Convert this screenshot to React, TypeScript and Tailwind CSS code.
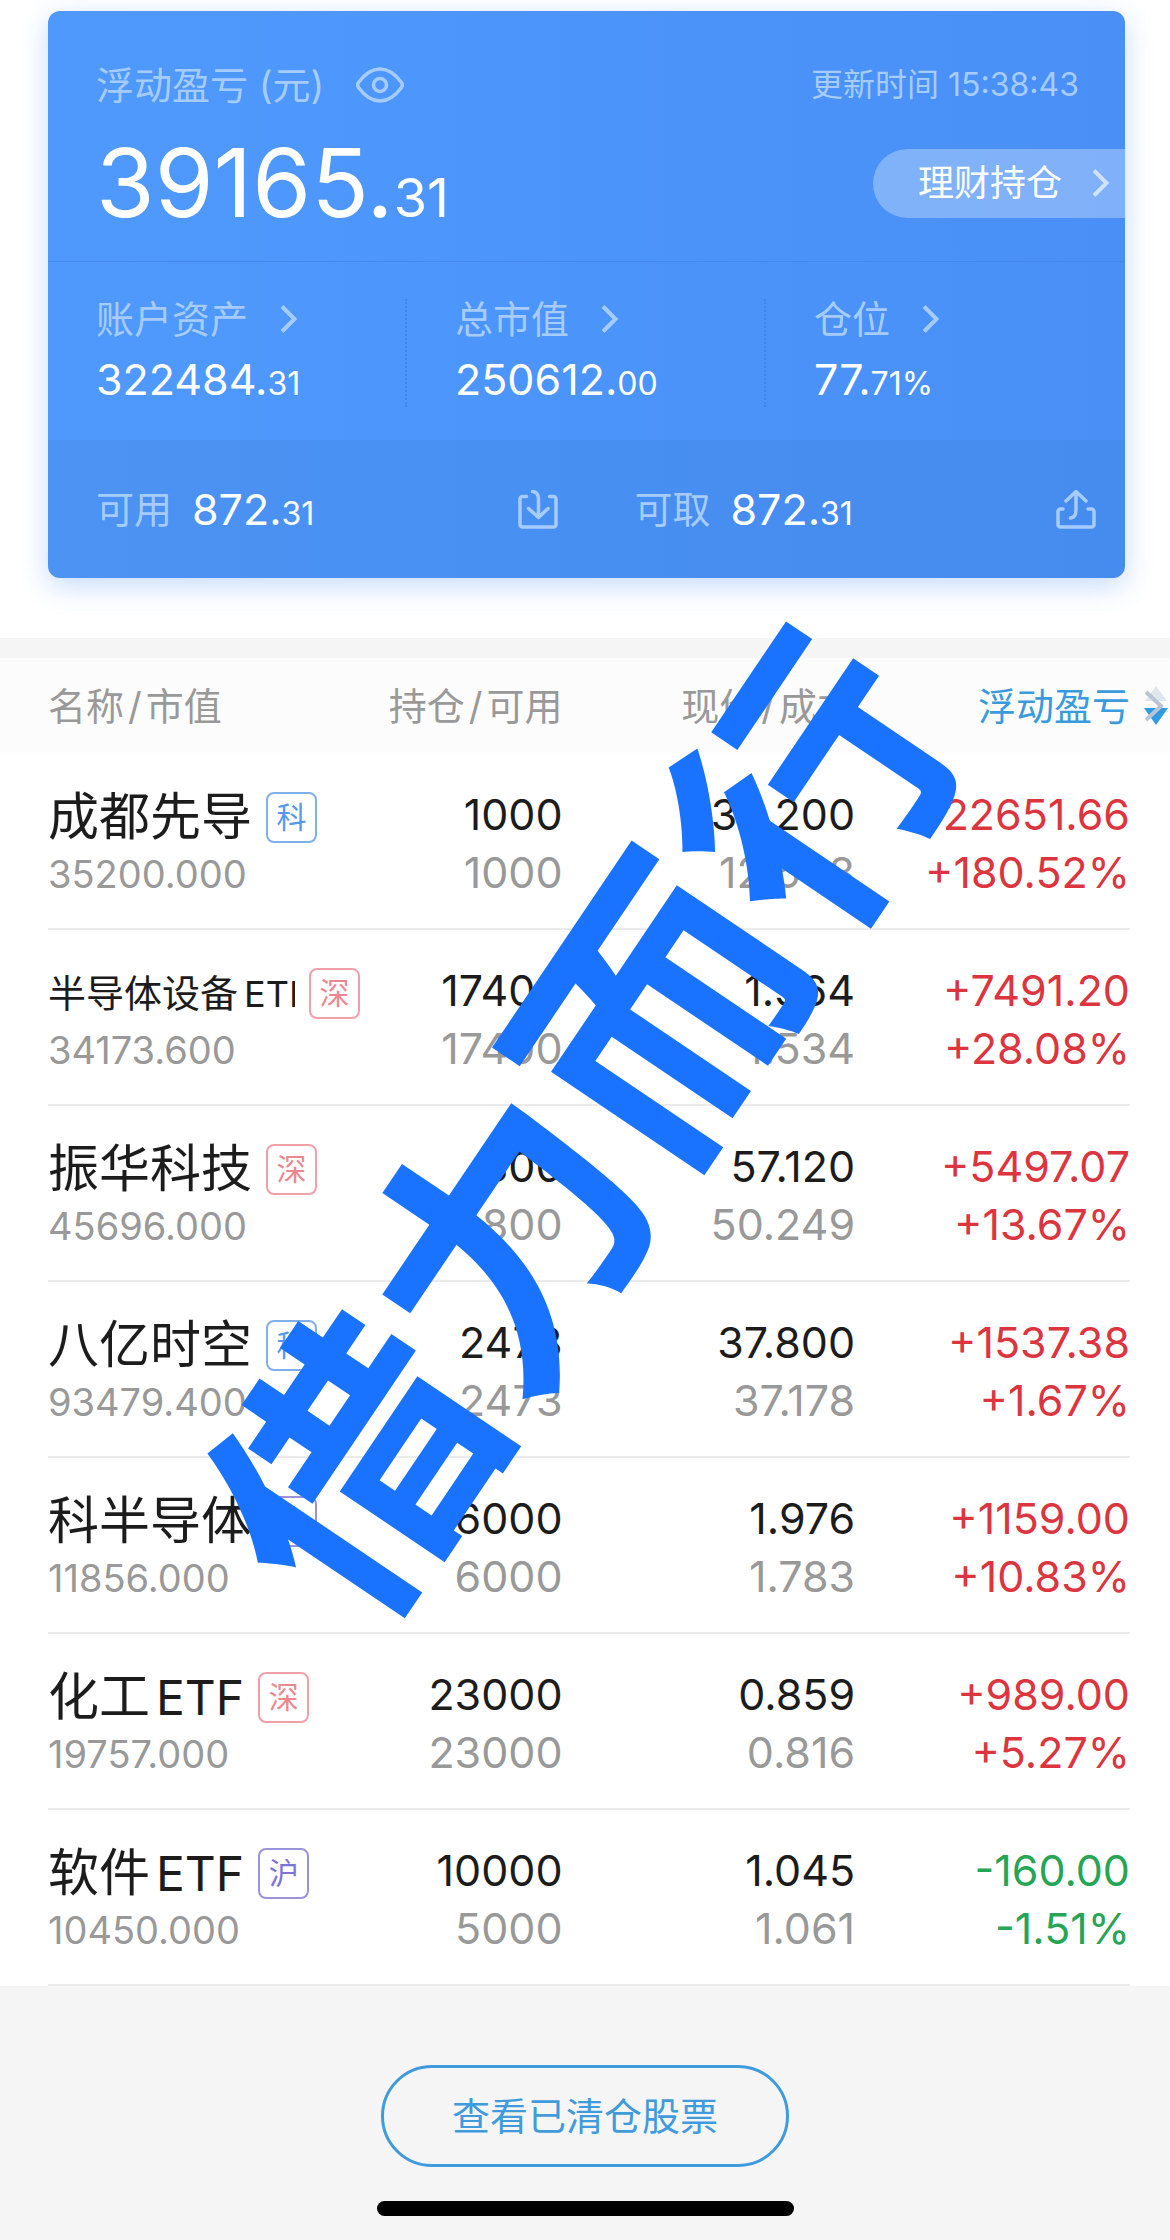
import React from "react";

type Market = "科" | "深" | "沪";

interface Holding {
  name: string;
  suffix?: string;
  compact?: boolean;
  market: Market;
  value: string;
  held: string;
  available: string;
  price: string;
  cost: string;
  profit: string;
  rate: string;
  down?: boolean;
}

const holdings: Holding[] = [
  { name: "成都先导", market: "科", value: "35200.000", held: "1000", available: "1000", price: "35.200", cost: "12.548", profit: "+22651.66", rate: "+180.52%" },
  { name: "半导体设备", suffix: "ETF", compact: true, market: "深", value: "34173.600", held: "17400", available: "17400", price: "1.964", cost: "1.534", profit: "+7491.20", rate: "+28.08%" },
  { name: "振华科技", market: "深", value: "45696.000", held: "800", available: "800", price: "57.120", cost: "50.249", profit: "+5497.07", rate: "+13.67%" },
  { name: "八亿时空", market: "科", value: "93479.400", held: "2473", available: "2473", price: "37.800", cost: "37.178", profit: "+1537.38", rate: "+1.67%" },
  { name: "科半导体", market: "沪", value: "11856.000", held: "6000", available: "6000", price: "1.976", cost: "1.783", profit: "+1159.00", rate: "+10.83%" },
  { name: "化工", suffix: "ETF", market: "深", value: "19757.000", held: "23000", available: "23000", price: "0.859", cost: "0.816", profit: "+989.00", rate: "+5.27%" },
  { name: "软件", suffix: "ETF", market: "沪", value: "10450.000", held: "10000", available: "5000", price: "1.045", cost: "1.061", profit: "-160.00", rate: "-1.51%", down: true },
];

const marketStyle: Record<Market, string> = {
  科: "border-[#7fb0ec] text-[#5598ee]",
  深: "border-[#f0a0a8] text-[#ee8690]",
  沪: "border-[#9a93dc] text-[#7d74da]",
};

function Chevron() {
  return (
    <svg width="18" height="30" viewBox="0 0 18 30" fill="none" stroke="currentColor" strokeWidth="4" aria-hidden="true">
      <path d="M2 2.5 14.5 15 2 27.5" />
    </svg>
  );
}

function EyeIcon() {
  return (
    <svg width="48" height="36" viewBox="0 0 48 36" fill="none" stroke="currentColor" strokeWidth="3.5" aria-hidden="true">
      <path d="M2.5 15.5C8 8 15 2 24 2S40 8 45.5 15.500Q47.300 18 45.500 20.500C40 28 33 34 24 34S8 28 2.500 20.500Q.7 18 2.500 15.500Z" />
      <circle cx="24" cy="18" r="6.500" />
    </svg>
  );
}

function TransferInIcon() {
  return (
    <svg width="40" height="40" viewBox="0 0 40 40" fill="none" stroke="currentColor" strokeWidth="3.5" strokeLinecap="round" strokeLinejoin="round" aria-hidden="true">
      <path d="M8.500 7.500H4.500a2.500 2.500 0 0 0-2.500 2.500V35.500A2.500 2.500 0 0 0 4.500 38H35.500a2.500 2.500 0 0 0 2.500-2.500V10A2.500 2.500 0 0 0 35.500 7.500H31.500" />
      <path d="M14.500 2.500Q20.500 3 20.500 10V28.500M10.500 19.500 20.500 28.500 30 19.500" />
    </svg>
  );
}

function TransferOutIcon() {
  return (
    <svg width="40" height="40" viewBox="0 0 40 40" fill="none" stroke="currentColor" strokeWidth="3.5" strokeLinecap="round" strokeLinejoin="round" aria-hidden="true">
      <path d="M7 20H4.500A2.500 2.500 0 0 0 2 22.500V35.500A2.500 2.500 0 0 0 4.500 38H35.500a2.500 2.500 0 0 0 2.500-2.500V22.500A2.500 2.500 0 0 0 35.500 20H32" />
      <path d="M14.500 29Q20 28.500 20 21V2.500M10 12 20 2.500 30 12" />
    </svg>
  );
}

function SortIcon() {
  return (
    <svg width="24" height="40" viewBox="0 0 24 40" aria-hidden="true">
      <path d="M12 0 23 15H1Z" fill="#dfe6ee" />
      <path d="M0 22H24L12 39Z" fill="#2f9be2" />
      <path d="M2 6 17 20 2 34" fill="none" stroke="#b9c4d4" strokeWidth="4" />
    </svg>
  );
}

function Slash() {
  return <span className="mx-1">/</span>;
}

function Amount({ whole, rest }: { whole: string; rest: string }) {
  return (
    <span className="block text-[43px] leading-[56px] text-white">
      {whole}.<span className="text-[32px] leading-none">{rest}</span>
    </span>
  );
}

function Metric({ label, whole, rest, divided }: { label: string; whole: string; rest: string; divided?: boolean }) {
  return (
    <a href="#detail" className={`block pl-12 ${divided ? "border-r-2 border-dotted border-[#3f86ea]" : ""}`}>
      <span className="flex h-10 items-center gap-8 text-[38px] leading-10 text-[#a6ccff]">
        {label}
        <Chevron />
      </span>
      <span className="mt-3 block h-[56px]">
        <Amount whole={whole} rest={rest} />
      </span>
    </a>
  );
}

function SummaryCard() {
  return (
    <section className="mr-[45px] ml-12 overflow-hidden rounded-xl bg-linear-to-r from-[#5099fc] via-[#4b94fa] to-[#498ff6] shadow-[0_8px_28px_rgba(74,144,250,0.32)]">
      <div className="border-b border-[#4388ea] pt-[50px] pb-[30px] pl-12">
        <div className="flex h-12 items-center justify-between pr-[46px] leading-[48px] text-[#a6ccff]">
          <div className="flex items-center gap-8">
            <h1 className="text-[38px]">浮动盈亏 (元)</h1>
            <button type="button" aria-label="隐藏金额">
              <EyeIcon />
            </button>
          </div>
          <p className="text-[32px]">更新时间 15:38:43</p>
        </div>
        <div className="mt-[26px] flex h-24 items-center justify-between">
          <p className="text-[95px] leading-[96px] text-white">
            39165.<span className="text-[54px] leading-none">31</span>
          </p>
          <button type="button" className="flex h-[69px] items-center gap-[30px] rounded-l-full bg-white/30 pr-[15px] pl-[45px] text-[36px] text-white">
            理财持仓
            <span className="text-[#cfe2ff]">
              <Chevron />
            </span>
          </button>
        </div>
      </div>
      <div className="grid grid-cols-3 pt-[37px] pb-[33px]">
        <Metric label="账户资产" whole="322484" rest="31" divided />
        <Metric label="总市值" whole="250612" rest="00" divided />
        <Metric label="仓位" whole="77" rest="71%" />
      </div>
      <div className="grid grid-cols-2 bg-[#3c7fd0]/20 py-[41px] text-[38px] leading-[56px] text-[#a6ccff]">
        <div className="flex h-[56px] items-center gap-5 pr-[29px] pl-12">
          <span>可用</span>
          <Amount whole="872" rest="31" />
          <button type="button" aria-label="转入" className="ml-auto">
            <TransferInIcon />
          </button>
        </div>
        <div className="flex h-[56px] items-center gap-5 pr-[29px] pl-12">
          <span>可取</span>
          <Amount whole="872" rest="31" />
          <button type="button" aria-label="转出" className="ml-auto">
            <TransferOutIcon />
          </button>
        </div>
      </div>
    </section>
  );
}

function HoldingRow({ item }: { item: Holding }) {
  const tone = item.down ? "text-[#27a556]" : "text-[#dc3540]";
  return (
    <tr className="text-right text-[43px] leading-[58px] text-[#1c1c1c]">
      <td className="pl-12 text-left">
        <div className="h-[176px] border-b-2 border-[#ebebeb] pt-8">
          <div className="flex h-[62px] items-center">
            {item.compact ? (
              <span className="mr-3.5 w-[247px] shrink-0 overflow-hidden text-[38px] whitespace-nowrap">
                {item.name}
                <span className="ml-1.5 text-[36px] leading-none">{item.suffix}</span>
              </span>
            ) : (
              <span className="mr-3.5 shrink-0 text-[51px] whitespace-nowrap">
                {item.name}
                {item.suffix && <span className="ml-1.5 text-[48px] leading-none">{item.suffix}</span>}
              </span>
            )}
            <span className={`flex size-[51px] shrink-0 items-center justify-center rounded-lg border-2 text-[30px] leading-none ${marketStyle[item.market]}`}>
              {item.market}
            </span>
          </div>
          <div className="text-[38px] leading-[52px] text-[#999999]">{item.value}</div>
        </div>
      </td>
      <td>
        <div className="h-[176px] border-b-2 border-[#ebebeb] pt-[31px]">
          <div>{item.held}</div>
          <div className="text-[#999999]">{item.available}</div>
        </div>
      </td>
      <td>
        <div className="h-[176px] border-b-2 border-[#ebebeb] pt-[31px]">
          <div>{item.price}</div>
          <div className="text-[#999999]">{item.cost}</div>
        </div>
      </td>
      <td>
        <div className={`h-[176px] border-b-2 border-[#ebebeb] pt-[31px] ${tone}`}>
          <div>{item.profit}</div>
          <div>{item.rate}</div>
        </div>
      </td>
      <td />
    </tr>
  );
}

export default function App() {
  return (
    <main className="relative min-h-screen overflow-hidden bg-[#f5f5f5] font-['Inter','Noto_Sans_CJK_SC',sans-serif]">
      <div className="bg-white pt-[11px] pb-[60px]">
        <SummaryCard />
      </div>

      <table className="mt-5 w-full table-fixed border-collapse bg-white">
        <colgroup>
          <col />
          <col className="w-[17%]" />
          <col className="w-[25%]" />
          <col className="w-[23.5%]" />
          <col className="w-10" />
        </colgroup>
        <thead>
          <tr className="h-24 bg-[#fcfcfc] text-right text-[38px] whitespace-nowrap text-[#999999]">
            <th scope="col" className="pl-12 text-left font-normal">名称<Slash />市值</th>
            <th scope="col" className="font-normal">持仓<Slash />可用</th>
            <th scope="col" className="font-normal">现价<Slash />成本</th>
            <th scope="col" className="font-normal text-[#3a9bdc]" aria-sort="descending">浮动盈亏</th>
            <td>
              <button type="button" aria-label="排序" className="ml-auto block pr-0.5">
                <SortIcon />
              </button>
            </td>
          </tr>
        </thead>
        <tbody>
          {holdings.map((item) => (
            <HoldingRow key={item.name} item={item} />
          ))}
        </tbody>
      </table>

      <footer className="flex flex-col items-center pt-[79px] pb-6">
        <button type="button" className="h-[102px] rounded-full border-3 border-[#3f9bdc] px-[68px] text-[38px] text-[#3f9bdc]">
          查看已清仓股票
        </button>
        <div className="mt-[34px] h-[15px] w-[417px] rounded-full bg-black" />
      </footer>

      <div className="pointer-events-none absolute top-[1116px] left-[571px] -translate-1/2 -rotate-56 font-['Noto_Sans_CJK_SC',sans-serif] text-[274px] leading-none font-bold whitespace-nowrap text-[#1a73ff]">
        借力而行
      </div>
    </main>
  );
}
